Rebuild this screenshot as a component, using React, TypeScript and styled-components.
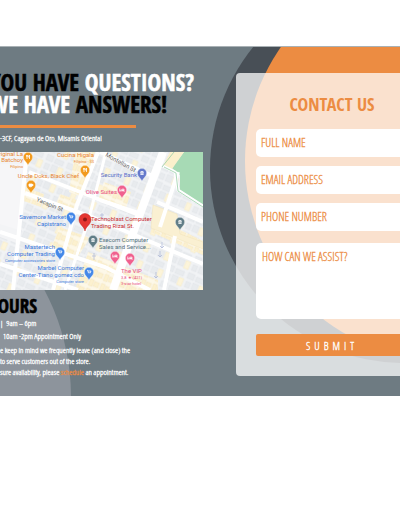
import React from "react";
import styled, { createGlobalStyle } from "styled-components";

const orange = "#ec8c42";
const condensed = '"Open Sans Condensed Light", "Roboto Condensed", sans-serif';
const display = '"Open Sans Condensed", "Roboto Condensed", sans-serif';

const Global = createGlobalStyle`
  * { box-sizing: border-box; }
  body { margin: 0; background: #fff; overflow-x: hidden; }
`;

const Page = styled.main`
  padding: 46px 0 120px;
  overflow: hidden;
`;

const Banner = styled.section`
  position: relative;
  overflow: hidden;
  display: grid;
  grid-template-columns: minmax(0, 59fr) minmax(0, 41fr);
  background: #6e7b82;
  border-top: 1px solid #a9b1b5;
`;

const Circle = styled.span<{ $x: string; $y: number; $r: number; $color: string }>`
  position: absolute;
  left: ${(p) => p.$x};
  top: ${(p) => p.$y}px;
  width: ${(p) => p.$r * 2}px;
  height: ${(p) => p.$r * 2}px;
  margin: ${(p) => -p.$r}px 0 0 ${(p) => -p.$r}px;
  border-radius: 50%;
  background: ${(p) => p.$color};
`;

const Info = styled.div`
  position: relative;
  padding: 24px 33px 19px 0;
  color: #fff;
  font-family: ${condensed};
  -webkit-text-stroke: 0.3px;
  white-space: nowrap;
`;

const Heading = styled.h1`
  margin: 0 0 0 -10px;
  font: 700 23px/22px ${display};
  -webkit-text-stroke: 0.5px;
`;

const Dark = styled.span`
  color: #000;
`;

const Rule = styled.hr`
  width: 67%;
  height: 3px;
  margin: 10px 0 3px;
  border: 0;
  background: ${orange};
`;

const Address = styled.address`
  margin-bottom: 7px;
  font: normal 8px/14px ${condensed};
`;

const MapFrame = styled.svg`
  display: block;
  width: 100%;
  height: auto;
  -webkit-text-stroke: 0;
`;

const Subheading = styled.h2`
  margin: 6px 0 0 -13px;
  color: #000;
  font: 700 19px/20px ${display};
  -webkit-text-stroke: 0.5px;
`;

const Hours = styled.p<{ $indent?: number }>`
  margin: 0;
  padding-left: ${(p) => p.$indent ?? 0}px;
  font-size: 8px;
  line-height: 13px;
  white-space: pre;
`;

const Note = styled.p`
  margin: 2px 0 0;
  font-size: 8px;
  line-height: 11px;
`;

const Schedule = styled.a`
  color: ${orange};
  text-decoration: none;
`;

const Card = styled.form`
  position: relative;
  display: flex;
  flex-direction: column;
  align-self: start;
  margin: 26px -28px 20px 0;
  padding: 20px;
  border-radius: 4px;
  background: rgba(255, 255, 255, 0.74);
`;

const Title = styled.h2`
  margin: 0 0 14px;
  color: ${orange};
  font: 700 18px/22px ${display};
  text-align: center;
`;

const fieldStyle = `
  display: block;
  width: 100%;
  margin: 0 0 9px;
  padding: 0 5px;
  border: 0;
  border-radius: 5px;
  background: #fff;
  color: ${orange};
  font: 12px/28px ${condensed};
  -webkit-text-stroke: 0.3px;
  &::placeholder { color: ${orange}; opacity: 1; }
`;

const Field = styled.input`
  ${fieldStyle}
  height: 28px;
`;

const Message = styled.textarea`
  ${fieldStyle}
  height: 76px;
  margin: 3px 0 15px;
  padding-left: 6px;
  resize: none;
`;

const Submit = styled.button`
  height: 22px;
  border: 0;
  border-radius: 2px;
  background: ${orange};
  color: #fff;
  font: 11px/22px ${condensed};
  -webkit-text-stroke: 0.3px;
  letter-spacing: 4px;
`;

const MapText = styled.text<{ $small?: boolean }>`
  font-family: Roboto, sans-serif;
  font-size: ${(p) => (p.$small ? 4 : 6)}px;
`;

type Label = [number, number, string, string, ("start" | "end")?, boolean?];
const labels: Label[] = [
  [23, 4, "Original La", "#e8842c", "end"],
  [23, 10, "Batchoy", "#e8842c", "end"],
  [23, 16, "Filipino", "#e8842c", "end", true],
  [94, 5, "Cucina Higala", "#e8842c", "end"],
  [94, 11, "Filipino · $$", "#e8842c", "end", true],
  [79, 26, "Uncle Doks, Black Chef", "#e8842c", "end"],
  [137, 25, "Security Bank", "#5a70c9", "end"],
  [117, 42, "Olive Suites", "#e84a82", "end"],
  [66, 67, "Savemore Market", "#3978dc", "end"],
  [66, 74, "Capistrano", "#3978dc", "end"],
  [91, 69, "Technoblast Computer", "#c92c32"],
  [91, 76, "Trading Rizal St.", "#c92c32"],
  [99, 90, "Execom Computer", "#52717d"],
  [99, 97, "Sales and Service...", "#52717d"],
  [55, 97, "Mastertech", "#3978dc", "end"],
  [55, 104, "Computer Trading", "#3978dc", "end"],
  [55, 110, "Computer accessories store", "#3978dc", "end", true],
  [84, 118, "Marbel Computer", "#3978dc", "end"],
  [84, 125, "Center-Tiano gomez cdo", "#3978dc", "end"],
  [84, 131, "Computer store", "#3978dc", "end", true],
  [121, 121, "The VIP", "#e84a82"],
  [121, 127, "3.8 ★ (421)", "#e84a82", "start", true],
  [121, 133, "3-star hotel", "#e84a82", "start", true],
];

type PinKind = "food" | "cup" | "bag" | "bed" | "dot";
const pins: [number, number, string, PinKind][] = [
  [28, 5, "#f29a1d", "food"],
  [85, 18, "#f29a1d", "food"],
  [31, 33, "#f29a1d", "cup"],
  [142, 21, "#6479cb", "dot"],
  [122, 38, "#f0608e", "bed"],
  [71, 65, "#4387e8", "bag"],
  [180, 70, "#607d87", "dot"],
  [93, 88, "#607d87", "dot"],
  [60, 100, "#4387e8", "bag"],
  [89, 120, "#4387e8", "bag"],
  [115, 104, "#f0608e", "bed"],
  [130, 106, "#f0608e", "bed"],
];

const glyphs: Record<PinKind, React.ReactNode> = {
  food: <path d="M-1.5-2v1.5q0 .7.5.7V2M-.5-2v1.5q0 .7-.5.7M1.5 2v-4Q.6-1.6.6.2h.9" />,
  cup: <path d="M-2-1h3v2q0 .8-1.5.8T-2 1zM1-.6h1v1.2H1" fill="#fff" />,
  bag: <path d="M-2-1.6h.8l.6 2.4h2l.5-1.8h-2.8M-.5 2h.1M1.3 2h.1" />,
  bed: <path d="M-2.2-1.5v3M-2.2.8h4.4v.8M2 .4v-1.2H-.2V.4zM-1.2-.5h.1" />,
  dot: <path d="M-1.6-.8 0-1.7l1.6.9zM-1-.4v1.5M0-.4v1.5M1-.4v1.5M-1.6 1.5h3.2" />,
};

const Pin = ({ x, y, color, kind }: { x: number; y: number; color: string; kind: PinKind }) => (
  <g transform={`translate(${x} ${y})`}>
    <path d="M0 8.5C-.6 5.5-4.7 3.8-4.7 0a4.7 4.7 0 0 1 9.4 0C4.7 3.8.6 5.5 0 8.5z" fill={color} stroke="#fff" strokeWidth=".4" />
    <g fill="none" stroke="#fff" strokeWidth=".8">{glyphs[kind]}</g>
  </g>
);

const StreetMap = () => (
  <MapFrame viewBox="0 0 203 138" role="img" aria-label="Map of Technoblast Computer Trading">
    <defs>
      <pattern id="blocks" width="22" height="18" patternUnits="userSpaceOnUse" patternTransform="rotate(23)">
        <rect width="22" height="18" fill="#f1f3f5" />
        <path d="M1 1h7v6H1zM10 2h9v5h-9zM2 10h5v6H2zM9 9h6v7H9z" fill="#e8ebee" stroke="#dfe3e6" strokeWidth=".4" />
        <path d="M16 9h5v8h-5z" fill="#fcf4da" stroke="#f3e6c0" strokeWidth=".4" />
      </pattern>
      <pattern id="shops" width="12" height="10" patternUnits="userSpaceOnUse" patternTransform="rotate(23)">
        <rect width="12" height="10" fill="#fdf8e8" />
        <path d="M1 1h4v7H1zM6 2h5v5H6z" fill="#fcf1cf" stroke="#f0e3ba" strokeWidth=".4" />
      </pattern>
    </defs>
    <rect width="203" height="138" fill="#f3f4f6" />
    <path d="M28 0h175v138H18L22 60z" fill="url(#blocks)" />
    <path d="M0 85l22 8-4 45H0z" fill="url(#blocks)" />
    <path d="M24 35l20 7-3 13-20-7zM60 42l17 6-4 12-18-6zM75 0h20L82 45 69 40zM60 75l30 11-13 20-27-9zM88 100l70 28v10H75zM104 30l27 10-5 16-28-8zM155 65l48 24v14l-52-23z" fill="url(#shops)" />
    <path d="M0 12h24l-5 66L0 72z" fill="#f6f6f8" />
    <path d="M153 53l24 9 3 20 23 8v7l-52-21z" fill="#faf0d2" stroke="#f0e3ba" strokeWidth=".5" />
    <path d="M184 0l-12 16 8 7v15l23 15V0z" fill="#a7dab5" />
    <path d="M184 0h-14l-7 14 9 3z" fill="#fbf0cc" />
    <g fill="none" stroke="#fff" strokeWidth="4">
      <path d="M27 0L13 138M25 41L92 65l111 47M0 80l105 35 45 23M98 0L77 53 53 138M0 112l78 26M29 20l110 43M100 0l55 25M100 48l38 13M157 50l46 20M178 20L160 75M175 84l-11 54" />
      <path d="M163 0l-26 70-24 68" strokeWidth="8" />
      <path d="M163 14l12 6 3 18 25 16M106 0L88 70 65 138" strokeWidth="3" />
    </g>
    <path d="M174 0l-12 15M164 15l12 6 2 18 25 16" fill="none" stroke="#9bcfa8" strokeWidth=".8" />
    <g fill="none" stroke="#aab4d6" strokeWidth=".7">
      <path d="M162 90v6m-2-2 2 2 2-2M160 99v6m-2-2 2 2 2-2M156 120v6m-2-2 2 2 2-2M94 101v7m-2-4h4M102 61v6m-2-4h4" />
    </g>
    <MapText transform="translate(36 49) rotate(22)" fill="#666">Yacapin St</MapText>
    <MapText transform="translate(105 4) rotate(29)" fill="#666">Montellan St</MapText>
    {labels.map(([x, y, text, color, anchor, small]) => (
      <MapText key={text} x={x} y={y} fill={color} textAnchor={anchor ?? "start"} $small={small}>{text}</MapText>
    ))}
    {pins.map(([x, y, color, kind]) => <Pin key={`${x}-${y}`} x={x} y={y} color={color} kind={kind} />)}
    <path d="M85 79c-.7-4.5-6-6.5-6-11.5a6 6 0 0 1 12 0c0 5-5.3 7-6 11.5z" fill="#e53631" stroke="#b82320" strokeWidth=".5" />
    <circle cx="85" cy="67.5" r="2" fill="#8f1817" />
  </MapFrame>
);

export default function App() {
  return (
    <>
      <Global />
      <Page>
        <Banner>
          <Circle $x="-158px" $y={350} $r={229} $color="#8d949c" />
          <Circle $x="101%" $y={122} $r={194} $color="#484f56" />
          <Circle $x="111%" $y={114} $r={199} $color={orange} />
          <Info>
            <Heading>
              <Dark>YOU HAVE</Dark> QUESTIONS?<br />
              WE HAVE <Dark>ANSWERS!</Dark>
            </Heading>
            <Rule />
            <Address>-3CF, Cagayan de Oro, Misamis Oriental</Address>
            <StreetMap />
            <Subheading>HOURS</Subheading>
            <Hours>|  9am – 6pm</Hours>
            <Hours $indent={3}>10am -2pm Appointment Only</Hours>
            <Note>
              e keep in mind we frequently leave (and close) the<br />
              to serve customers out of the store.<br />
              sure availability, please <Schedule href="#schedule">schedule</Schedule> an appointment.
            </Note>
          </Info>
          <Card onSubmit={(e) => e.preventDefault()}>
            <Title>CONTACT US</Title>
            <Field aria-label="Full name" placeholder="FULL NAME" />
            <Field type="email" aria-label="Email address" placeholder="EMAIL ADDRESS" />
            <Field type="tel" aria-label="Phone number" placeholder="PHONE NUMBER" />
            <Message aria-label="How can we assist?" placeholder="HOW CAN WE ASSIST?" />
            <Submit type="submit">SUBMIT</Submit>
          </Card>
        </Banner>
      </Page>
    </>
  );
}
